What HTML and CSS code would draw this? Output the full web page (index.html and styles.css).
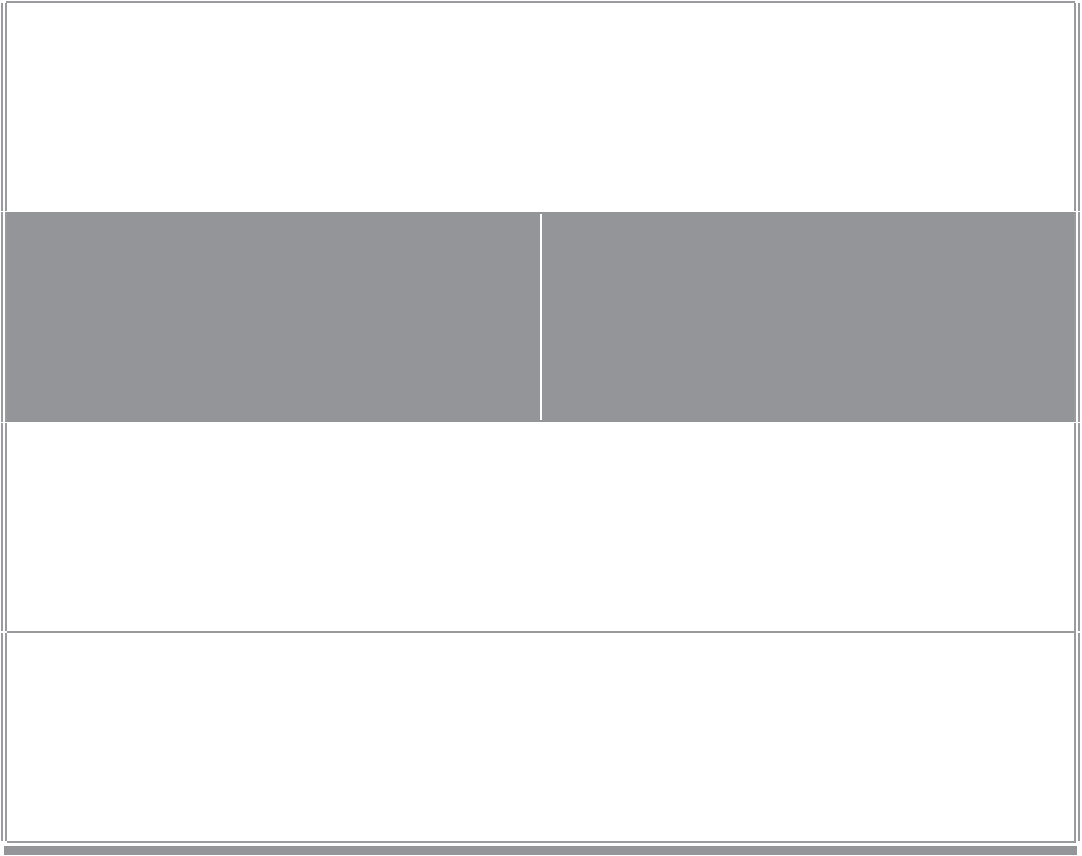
FILE: index.html
```html
<!DOCTYPE html>
<html lang="en">
<head>
<meta charset="utf-8">
<title>Table frame</title>
<link rel="stylesheet" href="styles.css">
</head>
<body>
<div class="frame">
  <div class="rule rule-top"></div>
  <div class="row row-a"></div>
  <div class="row row-b">
    <div class="cell"></div>
    <div class="divider"></div>
    <div class="cell"></div>
  </div>
  <div class="row row-c"></div>
  <div class="rule rule-mid"></div>
  <div class="row row-d"></div>
  <div class="rule rule-bottom"></div>
  <div class="bar"></div>
</div>
</body>
</html>
```

FILE: styles.css
```css
html, body {
  margin: 0;
  padding: 0;
  background: #ffffff;
  font-family: "Liberation Sans", Arial, sans-serif;
}

.frame {
  width: 1082px;
  height: 856px;
  padding-top: 1px;
  box-sizing: border-box;
  display: flex;
  flex-direction: column;
}

.rule {
  height: 2px;
  background: #9a9b9e;
  margin: 0 6px 0 7px;
  flex: none;
}

.rule-top {
  margin: 0 7px 0 6px;
}

.row {
  flex: none;
  margin: 0 2px 0 1px;
  border-left: 6px double #9a9b9e;
  border-right: 6px double #9a9b9e;
  background-clip: padding-box;
}

.row-a {
  height: 208px;
  margin-bottom: 1px;
}

.row-b {
  height: 210px;
  margin-bottom: 1px;
  background-color: #939598;
  display: grid;
  grid-template-columns: 1fr 2px 1fr;
}

.divider {
  background: #ffffff;
  margin: 2px 0;
}

.row-c {
  height: 208px;
}

.row-d {
  height: 208px;
}

.bar {
  flex: none;
  height: 9px;
  margin: 3px 5px 0 4px;
  background: #939598;
}
```
